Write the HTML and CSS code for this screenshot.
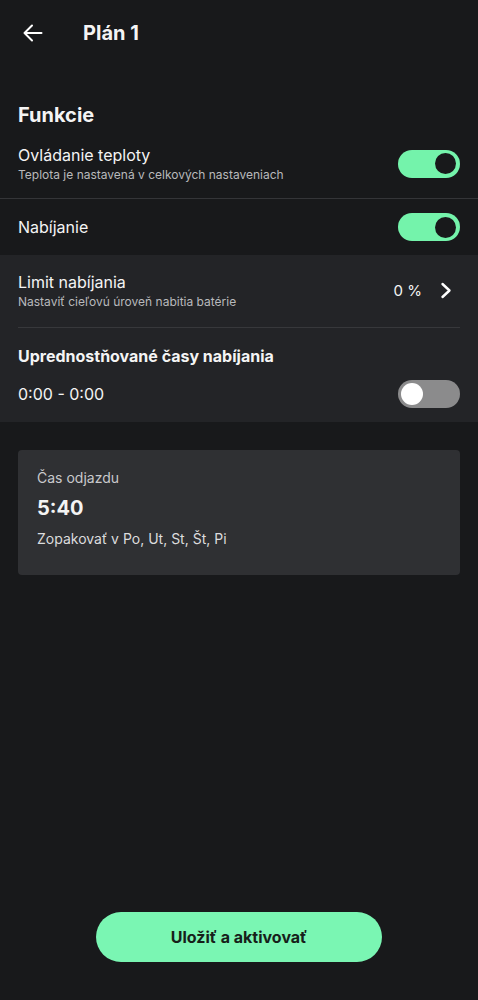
FILE: index.html
```html
<!DOCTYPE html>
<html lang="sk">
<head>
  <meta charset="UTF-8">
  <meta name="viewport" content="width=device-width, initial-scale=1.0">
  <title>Plán 1</title>
  <link rel="stylesheet" href="styles.css">
</head>
<body>
  <div class="page">
    <header class="header">
      <button class="back" aria-label="Späť">
        <svg width="20" height="18" viewBox="0 0 20 18" fill="none" stroke="#fff" stroke-width="2" stroke-linecap="round" stroke-linejoin="round">
          <path d="M18.5 9H1.5M9 1.5L1.5 9L9 16.5"/>
        </svg>
      </button>
      <h1 class="title">Plán 1</h1>
    </header>

    <h2 class="heading">Funkcie</h2>

    <div class="row row-border">
      <div class="row-text">
        <div class="row-title">Ovládanie teploty</div>
        <div class="row-sub">Teplota je nastavená v celkových nastaveniach</div>
      </div>
      <span class="toggle on"><span class="knob"></span></span>
    </div>

    <div class="row row-plain">
      <div class="row-title">Nabíjanie</div>
      <span class="toggle on"><span class="knob"></span></span>
    </div>

    <div class="charging">
      <div class="limit">
        <div class="row-text">
          <div class="row-title">Limit nabíjania</div>
          <div class="row-sub">Nastaviť cieľovú úroveň nabitia batérie</div>
        </div>
        <div class="limit-value">
          <span>0 %</span>
          <svg width="12" height="17" viewBox="0 0 12 17" fill="none" stroke="#fff" stroke-width="2.4" stroke-linecap="round" stroke-linejoin="round">
            <path d="M2.5 2L9.5 8.5L2.5 15"/>
          </svg>
        </div>
      </div>
      <div class="pref-title">Uprednostňované časy nabíjania</div>
      <div class="pref-row">
        <span class="pref-time">0:00 - 0:00</span>
        <span class="toggle"><span class="knob"></span></span>
      </div>
    </div>

    <div class="card">
      <div class="card-label">Čas odjazdu</div>
      <div class="card-time">5:40</div>
      <div class="card-repeat">Zopakovať v Po, Ut, St, Št, Pi</div>
    </div>

    <footer class="footer">
      <button class="save">Uložiť a aktivovať</button>
    </footer>
  </div>
</body>
</html>
```

FILE: styles.css
```css
* { box-sizing: border-box; }
body { margin: 0; background: #18191b; color: #f4f4f4; font-family: Inter, "Noto Sans", sans-serif; }
.page { min-height: 100vh; display: flex; flex-direction: column; }

.header { height: 66px; display: flex; align-items: center; padding: 0 23px; }
.back { background: none; border: none; padding: 0; width: 20px; height: 18px; display: flex; cursor: pointer; }
.title { margin: 0 0 0 40px; font-size: 20px; font-weight: 700; line-height: 24px; }

.heading { margin: 37px 18px 0; font-size: 20px; font-weight: 700; line-height: 24px; }

.row { display: flex; align-items: center; justify-content: space-between; padding: 0 18px; }
.row-border { padding-top: 17px; padding-bottom: 15px; border-bottom: 1px solid #343538; }
.row-plain { height: 56px; }
.row-title { font-size: 16px; line-height: 22px; }
.row-sub { font-size: 12px; line-height: 16px; color: #b8b9bc; margin-top: 1px; }

.toggle { width: 62px; height: 28px; border-radius: 14px; background: #8b8b8c; display: flex; align-items: center; padding: 0 3px; flex-shrink: 0; }
.toggle .knob { width: 22px; height: 22px; border-radius: 50%; background: #fff; }
.toggle.on { background: #74f3ab; justify-content: flex-end; padding: 0 4px; }
.toggle.on .knob { width: 21px; height: 21px; background: #18191b; }

.charging { background: #232427; padding: 0 18px 14px; }
.limit { display: flex; align-items: center; justify-content: space-between; padding: 16px 0 17px; border-bottom: 1px solid #37383b; }
.limit-value { display: flex; align-items: center; gap: 18px; font-size: 15px; padding-right: 8px; }
.pref-title { margin-top: 17px; font-size: 16px; font-weight: 700; line-height: 22px; }
.pref-row { display: flex; align-items: center; justify-content: space-between; margin-top: 13px; }
.pref-time { font-size: 16px; }

.card { margin: 28px 18px 0; background: #2f3033; border-radius: 4px; padding: 18px 19px 26px; }
.card-label { font-size: 14px; line-height: 20px; color: #c9c9cc; }
.card-time { margin-top: 7px; font-size: 20px; font-weight: 700; line-height: 26px; }
.card-repeat { margin-top: 8px; font-size: 14px; line-height: 20px; color: #dcdcde; }

.footer { margin-top: auto; display: flex; justify-content: center; padding-bottom: 38px; }
.save { width: 286px; height: 50px; border: none; border-radius: 25px; background: #7af6b3; color: #162019; font-family: Inter, "Noto Sans", sans-serif; font-size: 16px; font-weight: 700; cursor: pointer; }
```
